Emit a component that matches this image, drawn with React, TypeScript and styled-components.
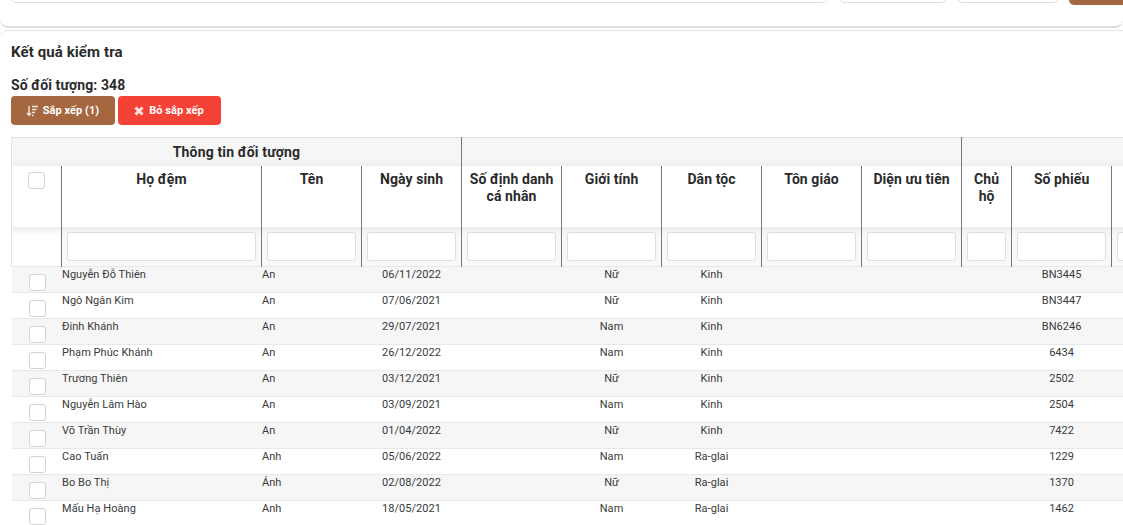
import styled, { createGlobalStyle } from "styled-components";

const GlobalStyle = createGlobalStyle`
  html, body {
    margin: 0;
    padding: 0;
    background: #fff;
    overflow: hidden;
    font-family: Roboto, "Liberation Sans", sans-serif;
    color: #2b2b2b;
  }
`;

const Page = styled.div`
  width: 1123px;
  height: 525px;
  overflow: hidden;
`;

const FilterCard = styled.div`
  height: 26px;
  border-bottom: 2px solid #dedede;
  border-radius: 0 0 8px 8px;
  overflow: hidden;
`;

const FilterRow = styled.div`
  display: flex;
  gap: 11px;
  margin-top: -28px;
  padding-left: 11px;
`;

const FilterBox = styled.div<{ $width: number }>`
  width: ${(p) => p.$width}px;
  height: 31px;
  flex: none;
  box-sizing: border-box;
  border: 1px solid #dedede;
  border-radius: 5px;
`;

const SearchButton = styled.div`
  width: 80px;
  height: 33px;
  flex: none;
  background: #a5673f;
  border-radius: 5px;
`;

const ResultCard = styled.div`
  margin-top: 2px;
  border-top: 1px solid #e4e4e4;
  border-radius: 8px 0 0 0;
  padding: 11px 0 0 11px;
`;

const Title = styled.h2`
  margin: 0;
  font-size: 15px;
  line-height: 20px;
  font-weight: 700;
  letter-spacing: 0.1px;
`;

const Count = styled.div`
  margin-top: 15px;
  font-size: 14px;
  line-height: 17px;
  font-weight: 700;
  letter-spacing: 0.1px;
`;

const Actions = styled.div`
  display: flex;
  gap: 3px;
  margin-top: 2px;
`;

const ActionButton = styled.button<{ $bg: string; $width: number }>`
  display: flex;
  align-items: center;
  justify-content: center;
  gap: 5px;
  width: ${(p) => p.$width}px;
  height: 29px;
  padding: 0 1px 0 0;
  border: 0;
  border-radius: 4px;
  background: ${(p) => p.$bg};
  color: #fff;
  font-family: inherit;
  font-size: 11px;
  font-weight: 700;
  letter-spacing: 0.05px;
`;

const TableWrap = styled.div`
  margin-top: 12px;
`;

const Table = styled.table`
  table-layout: fixed;
  width: 1189px;
  border-collapse: collapse;
`;

const GroupCell = styled.th`
  height: 28px;
  padding: 0;
  background: linear-gradient(#f6f6f6, #f6f6f6 22px, #eeeeee);
  border-top: 1px solid #e2e2e2;
  border-right: 1px solid #777;
  font-size: 14px;
  font-weight: 700;
  letter-spacing: 0.15px;
  text-align: center;
  &:first-child {
    border-left: 1px solid #e2e2e2;
  }
`;

const HeadCell = styled.th`
  height: 61px;
  padding: 5px 6px 0;
  box-sizing: border-box;
  background: #fff;
  border-right: 1px solid #777;
  font-size: 14px;
  line-height: 17px;
  font-weight: 700;
  letter-spacing: 0.08px;
  text-align: center;
  vertical-align: top;
  &:first-child {
    border-left: 1px solid #e2e2e2;
    padding: 0;
  }
`;

const InputCell = styled.td`
  height: 39px;
  padding: 5px;
  box-sizing: border-box;
  background: linear-gradient(#ececec, #f8f8f8 8px, #f8f8f8);
  border-right: 1px solid #777;
  &:first-child {
    border-left: 1px solid #e2e2e2;
    background: linear-gradient(#ececec, #fff 8px, #fff);
  }
`;

const FilterInput = styled.div`
  height: 29px;
  box-sizing: border-box;
  background: #fff;
  border: 1px solid #dedede;
  border-radius: 3px;
`;

const BodyRow = styled.tr`
  background: #fff;
  &:nth-child(odd) {
    background: #f6f6f6;
  }
`;

const BodyCell = styled.td<{ $center?: boolean }>`
  height: 26px;
  padding: 1px 0 0 ${(p) => (p.$center ? "0" : "0.5px")};
  box-sizing: border-box;
  border-top: 1px solid #e8e8e8;
  font-size: 11px;
  line-height: 14px;
  letter-spacing: 0.05px;
  color: #3a3a3a;
  text-align: ${(p) => (p.$center ? "center" : "left")};
  vertical-align: top;
`;

const Check = styled.span<{ $head?: boolean }>`
  display: block;
  width: 17px;
  height: 17px;
  box-sizing: border-box;
  background: #fff;
  border: 1px solid #d4d4d4;
  border-radius: 3px;
  margin: ${(p) => (p.$head ? "6px 0 0 16px" : "6px 0 0 17px")};
`;

const columns = [
  "",
  "Họ đệm",
  "Tên",
  "Ngày sinh",
  "Số định danh cá nhân",
  "Giới tính",
  "Dân tộc",
  "Tôn giáo",
  "Diện ưu tiên",
  "Chủ hộ",
  "Số phiếu",
  "",
];

const widths = [50, 200, 100, 100, 100, 100, 100, 100, 100, 50, 100, 89];

const rows = [
  ["Nguyễn Đỗ Thiên", "An", "06/11/2022", "Nữ", "Kinh", "BN3445"],
  ["Ngô Ngân Kim", "An", "07/06/2021", "Nữ", "Kinh", "BN3447"],
  ["Đinh Khánh", "An", "29/07/2021", "Nam", "Kinh", "BN6246"],
  ["Phạm Phúc Khánh", "An", "26/12/2022", "Nam", "Kinh", "6434"],
  ["Trương Thiên", "An", "03/12/2021", "Nữ", "Kinh", "2502"],
  ["Nguyễn Lâm Hào", "An", "03/09/2021", "Nam", "Kinh", "2504"],
  ["Võ Trần Thùy", "An", "01/04/2022", "Nữ", "Kinh", "7422"],
  ["Cao Tuấn", "Anh", "05/06/2022", "Nam", "Ra-glai", "1229"],
  ["Bo Bo Thị", "Ánh", "02/08/2022", "Nữ", "Ra-glai", "1370"],
  ["Mấu Hạ Hoàng", "Anh", "18/05/2021", "Nam", "Ra-glai", "1462"],
];

const SortIcon = () => (
  <svg width="12" height="12" viewBox="0 0 12 12" fill="none" stroke="#f3e6dd" strokeWidth="1.4">
    <path d="M3 1v9M1 8l2 2.5L5 8" />
    <path d="M6 1.5h6M6 4.5h4.5M6 7.5h3M6 10.5h1.5" />
  </svg>
);

const CloseIcon = () => (
  <svg width="10" height="10" viewBox="0 0 10 10" fill="none" stroke="#fde3e1" strokeWidth="3">
    <path d="M1.5 1.5l7 7M8.5 1.5l-7 7" />
  </svg>
);

export default function App() {
  return (
    <Page>
      <GlobalStyle />
      <FilterCard>
        <FilterRow>
          <FilterBox $width={817} />
          <FilterBox $width={107} />
          <FilterBox $width={101} />
          <SearchButton />
        </FilterRow>
      </FilterCard>
      <ResultCard>
        <Title>Kết quả kiểm tra</Title>
        <Count>Số đối tượng: 348</Count>
        <Actions>
          <ActionButton $bg="#a5673f" $width={104}>
            <SortIcon />
            Sắp xếp (1)
          </ActionButton>
          <ActionButton $bg="#f44336" $width={103}>
            <CloseIcon />
            Bỏ sắp xếp
          </ActionButton>
        </Actions>
        <TableWrap>
          <Table>
            <colgroup>
              {widths.map((w, i) => (
                <col key={i} style={{ width: w }} />
              ))}
            </colgroup>
            <thead>
              <tr>
                <GroupCell colSpan={4}>Thông tin đối tượng</GroupCell>
                <GroupCell colSpan={5} />
                <GroupCell colSpan={3} />
              </tr>
              <tr>
                {columns.map((c, i) => (
                  <HeadCell key={i}>{i === 0 ? <Check $head /> : c}</HeadCell>
                ))}
              </tr>
              <tr>
                {columns.map((_, i) => (
                  <InputCell key={i}>{i > 0 && <FilterInput />}</InputCell>
                ))}
              </tr>
            </thead>
            <tbody>
              {rows.map((r) => (
                <BodyRow key={r[0]}>
                  <BodyCell>
                    <Check />
                  </BodyCell>
                  <BodyCell>{r[0]}</BodyCell>
                  <BodyCell>{r[1]}</BodyCell>
                  <BodyCell $center>{r[2]}</BodyCell>
                  <BodyCell />
                  <BodyCell $center>{r[3]}</BodyCell>
                  <BodyCell $center>{r[4]}</BodyCell>
                  <BodyCell />
                  <BodyCell />
                  <BodyCell />
                  <BodyCell $center>{r[5]}</BodyCell>
                  <BodyCell />
                </BodyRow>
              ))}
            </tbody>
          </Table>
        </TableWrap>
      </ResultCard>
    </Page>
  );
}
